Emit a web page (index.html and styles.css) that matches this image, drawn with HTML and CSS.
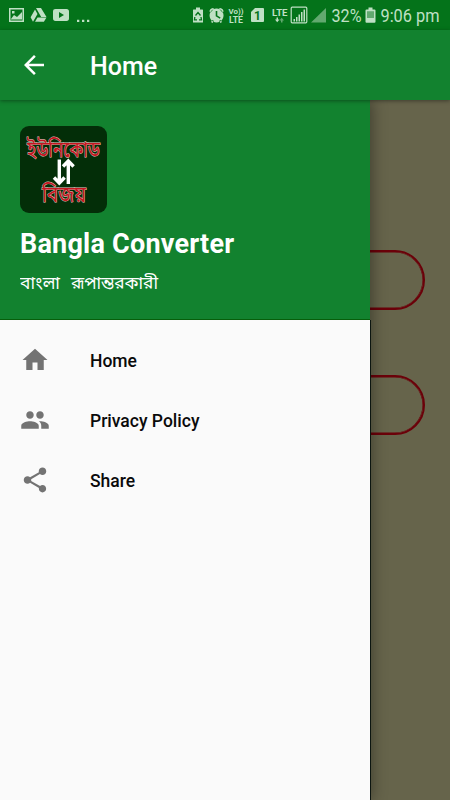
FILE: index.html
```
<!DOCTYPE html>
<html lang="en">
<head>
<meta charset="utf-8">
<title>Bangla Converter</title>
<link rel="stylesheet" href="styles.css">
</head>
<body>
<div class="screen">
  <header class="status">
    <svg width="450" height="30" viewBox="0 0 450 30" fill="#bfe0c4">
      <path fill-rule="evenodd" d="M9 8h15v14H9zM10.500 9.500v11h12v-11zM11 19l3-4 3 2 5-5v7.500H11zM12 11h2.500v2.500H12z"/>
      <path d="M36 8h5l5.500 9h-5.300zM35 9.500l2.500 4.500-4.500 7.800-2.400-4.600zM37.500 17.500h9l-2.600 4.300H35z"/>
      <path fill-rule="evenodd" d="M55.500 9h11q2.500 0 2.500 2.500v6.800q0 2.700-2.500 2.700h-11q-2.500 0-2.500-2.700v-6.800Q53 9 55.500 9zM59 12v6l5-3z"/>
      <path d="M77 19.700h2.300V22H77zM82 19.700h2.300V22H82zM87 19.700h2.300V22H87z"/>
      <path d="M196 7.500h4v2h2.500q.5 0 .5.500v12.500h-10V10q0-.5.500-.5h2.500z"/>
      <path d="M195.500 15.500l2.500-3 2.500 3M201 17l.5 2.800h-2.500M194.800 17l-.3 2.800h2.500" fill="none" stroke="#04731a" stroke-width="1.300"/>
      <path fill-rule="evenodd" d="M216.500 8.500a7 7 0 1 0 .1 0zM215.700 11h1.600v4.500l3.300 1.900-.8 1.400-4.100-2.500zM209.500 11.500q0-3 3.500-3.500l1 .8-3.500 3.700zM223.500 11.500q0-3-3.500-3.500l-1 .8 3.500 3.700zM211 22l1.500-2 1.500 1-1.500 2zM222 22l-1.500-2-1.500 1 1.500 2z"/>
      <text class="st bold" x="228.500" y="14" font-size="7.500" textLength="15" lengthAdjust="spacingAndGlyphs">Vo))</text>
      <text class="st bold" x="229" y="22.800" font-size="8.500" textLength="14" lengthAdjust="spacingAndGlyphs">LTE</text>
      <path d="M255 8h8q1 0 1 1v12q0 1-1 1h-11q-1 0-1-1v-9z"/>
      <text class="st bold sim" x="257.500" y="19.500" font-size="12" text-anchor="middle">1</text>
      <text class="st bold" x="272" y="15.500" font-size="9.500" textLength="15.500" lengthAdjust="spacingAndGlyphs">LTE</text>
      <path d="M276.500 17.500h1.500v2h1.500l-2.300 2.800-2.200-2.800h1.500z"/>
      <path opacity=".5" d="M281 22.500h1.500v-2h1.500l-2.300-2.800-2.200 2.800h1.500z"/>
      <rect x="291.200" y="7.200" width="15.600" height="15.600" rx="1" fill="none" stroke="#bfe0c4" stroke-width="1.200"/>
      <path d="M293.500 19h1.500v2.500h-1.500zM296 17h1.500v4.500H296zM298.500 14.500h1.500v7h-1.500zM301 12h1.500v9.500H301zM303.500 9.500h1.500v12h-1.500z"/>
      <path opacity=".5" d="M326 8v14.500h-15z"/>
      <text class="st" x="331.500" y="22.300" font-size="19" textLength="30" lengthAdjust="spacingAndGlyphs">32%</text>
      <path fill-rule="evenodd" d="M368.500 7.500h4v2h2q1 0 1 1v11.200q0 1-1 1h-8q-1 0-1-1V10.500q0-1 1-1h2zM367 11.500v6.500h7v-6.500z"/>
      <path opacity=".5" d="M367 11.500h7V18h-7z"/>
      <text class="st" x="380.500" y="22.300" font-size="19" textLength="59" lengthAdjust="spacingAndGlyphs">9:06 pm</text>
    </svg>
  </header>
  <div class="appbar">
    <svg class="icon" viewBox="0 0 24 24"><path d="M20 11H7.830l5.590-5.590L12 4l-8 8 8 8 1.410-1.410L7.830 13H20z"/></svg>
    <h1>Home</h1>
  </div>
  <main class="content">
    <div class="outline"></div>
    <div class="outline"></div>
    <aside class="drawer">
      <div class="profile">
        <div class="logo">
          <svg width="87" height="87" viewBox="0 0 87 87">
            <text class="bn" x="7" y="30.500" font-size="21.500" textLength="73" lengthAdjust="spacingAndGlyphs">ইউনিকোড</text>
            <path class="arrows" d="M39.300 33.500V57M34 51.500l5.300 5.500 5.300-5.500M48.300 58V35M43 40.500l5.300-5.500 5.300 5.500"/>
            <text class="bn" x="22" y="75.500" font-size="21.500" textLength="44" lengthAdjust="spacingAndGlyphs">বিজয়</text>
          </svg>
        </div>
        <h2>Bangla Converter</h2>
        <svg class="tagline" width="160" height="30"><text x="0" y="20" font-size="18" textLength="40" lengthAdjust="spacingAndGlyphs">বাংলা</text><text x="51" y="20" font-size="18" textLength="87" lengthAdjust="spacingAndGlyphs">রূপান্তরকারী</text></svg>
      </div>
      <nav class="menu">
        <a class="item"><svg class="icon" viewBox="0 0 24 24"><path d="M10 20v-6h4v6h5v-8h3L12 3 2 12h3v8z"/></svg><span>Home</span></a>
        <a class="item"><svg class="icon" viewBox="0 0 24 24"><path d="M16 11c1.660 0 2.990-1.340 2.990-3S17.660 5 16 5s-3 1.340-3 3 1.340 3 3 3zm-8 0c1.660 0 2.990-1.340 2.990-3S9.660 5 8 5 5 6.340 5 8s1.340 3 3 3zm0 2c-2.330 0-7 1.170-7 3.500V19h14v-2.500c0-2.330-4.670-3.500-7-3.500zm8 0c-.29 0-.62.020-.97.050 1.160.84 1.970 1.970 1.970 3.450V19h6v-2.500c0-2.330-4.670-3.500-7-3.500z"/></svg><span>Privacy Policy</span></a>
        <a class="item"><svg class="icon" viewBox="0 0 24 24"><path d="M18 16.080c-.76 0-1.440.3-1.960.77L8.910 12.700c.05-.23.090-.46.090-.7s-.04-.47-.09-.7l7.050-4.110c.54.5 1.250.81 2.040.81 1.660 0 3-1.340 3-3s-1.340-3-3-3-3 1.340-3 3c0 .24.040.47.090.7L8.040 9.810C7.500 9.310 6.790 9 6 9c-1.660 0-3 1.340-3 3s1.340 3 3 3c.79 0 1.500-.31 2.040-.81l7.120 4.160c-.05.21-.08.43-.08.65 0 1.610 1.310 2.920 2.920 2.920s2.920-1.310 2.920-2.920-1.310-2.920-2.920-2.920z"/></svg><span>Share</span></a>
      </nav>
    </aside>
  </main>
</div>
</body>
</html>
```
FILE: styles.css
```
* { box-sizing: border-box; }
body { margin: 0; font-family: Roboto, "Noto Sans", sans-serif; }
h1, h2 { margin: 0; }
.screen { width: 450px; height: 800px; display: flex; flex-direction: column; overflow: hidden; }
.status { height: 30px; background: #04731a; }
.status svg { display: block; }
.st { font-family: Roboto, sans-serif; }
.bold { font-weight: 700; }
.sim { fill: #04731a; }
.icon { width: 30px; height: 30px; flex: none; fill: currentColor; }
.appbar {
  height: 70px; display: flex; align-items: center; gap: 41px; padding: 0 19px;
  background: #12822f; color: #fff; position: relative; z-index: 2;
  box-shadow: 0 1px 4px rgba(0, 0, 0, .4);
}
.appbar h1 { font-size: 25px; font-weight: 500; line-height: 30px; padding-top: 3px; }
.content {
  flex: 1; position: relative; background: #66644b;
  display: flex; flex-direction: column; gap: 65px; padding: 150px 25px 0;
}
.outline {
  height: 60px; flex: none; border: 2px solid #6b0009; border-radius: 30px;
  box-shadow: inset 0 0 0 .5px #6b0009;
}
.drawer {
  position: absolute; left: 0; top: 0; bottom: 0; width: 370px;
  display: flex; flex-direction: column;
  background: #fafafa; box-shadow: 2px 0 14px rgba(0, 0, 0, .38);
}
.profile {
  height: 220px; flex: none; padding: 26px 20px 0; background: #12822f; color: #fff;
  border-bottom: 1px solid #075f0b;
}
.logo { width: 87px; height: 87px; border-radius: 9px; background: #032e08; }
.logo svg { display: block; overflow: visible; }
.bn { fill: #c5161f; stroke: #e4c9c6; stroke-width: .9px; paint-order: stroke; font-family: "Noto Sans Bengali", "Noto Sans", sans-serif; }
.arrows { fill: none; stroke: #fff; stroke-width: 3.4px; }
.profile h2 { margin-top: 15px; font-size: 27px; font-weight: 700; line-height: 33px; letter-spacing: .22px; white-space: nowrap; }
.tagline { display: block; margin-top: 8px; fill: #fff; font-family: "Noto Sans Bengali", "Noto Sans", sans-serif; }
.menu { flex: 1; padding-top: 10px; box-shadow: 1px 0 0 #0c1510; }
.item { height: 60px; display: flex; align-items: center; gap: 40px; padding: 0 20px; color: #737373; }
.item span { color: #0a0a0a; font-size: 17.5px; font-weight: 500; padding-top: 1px; }
```
